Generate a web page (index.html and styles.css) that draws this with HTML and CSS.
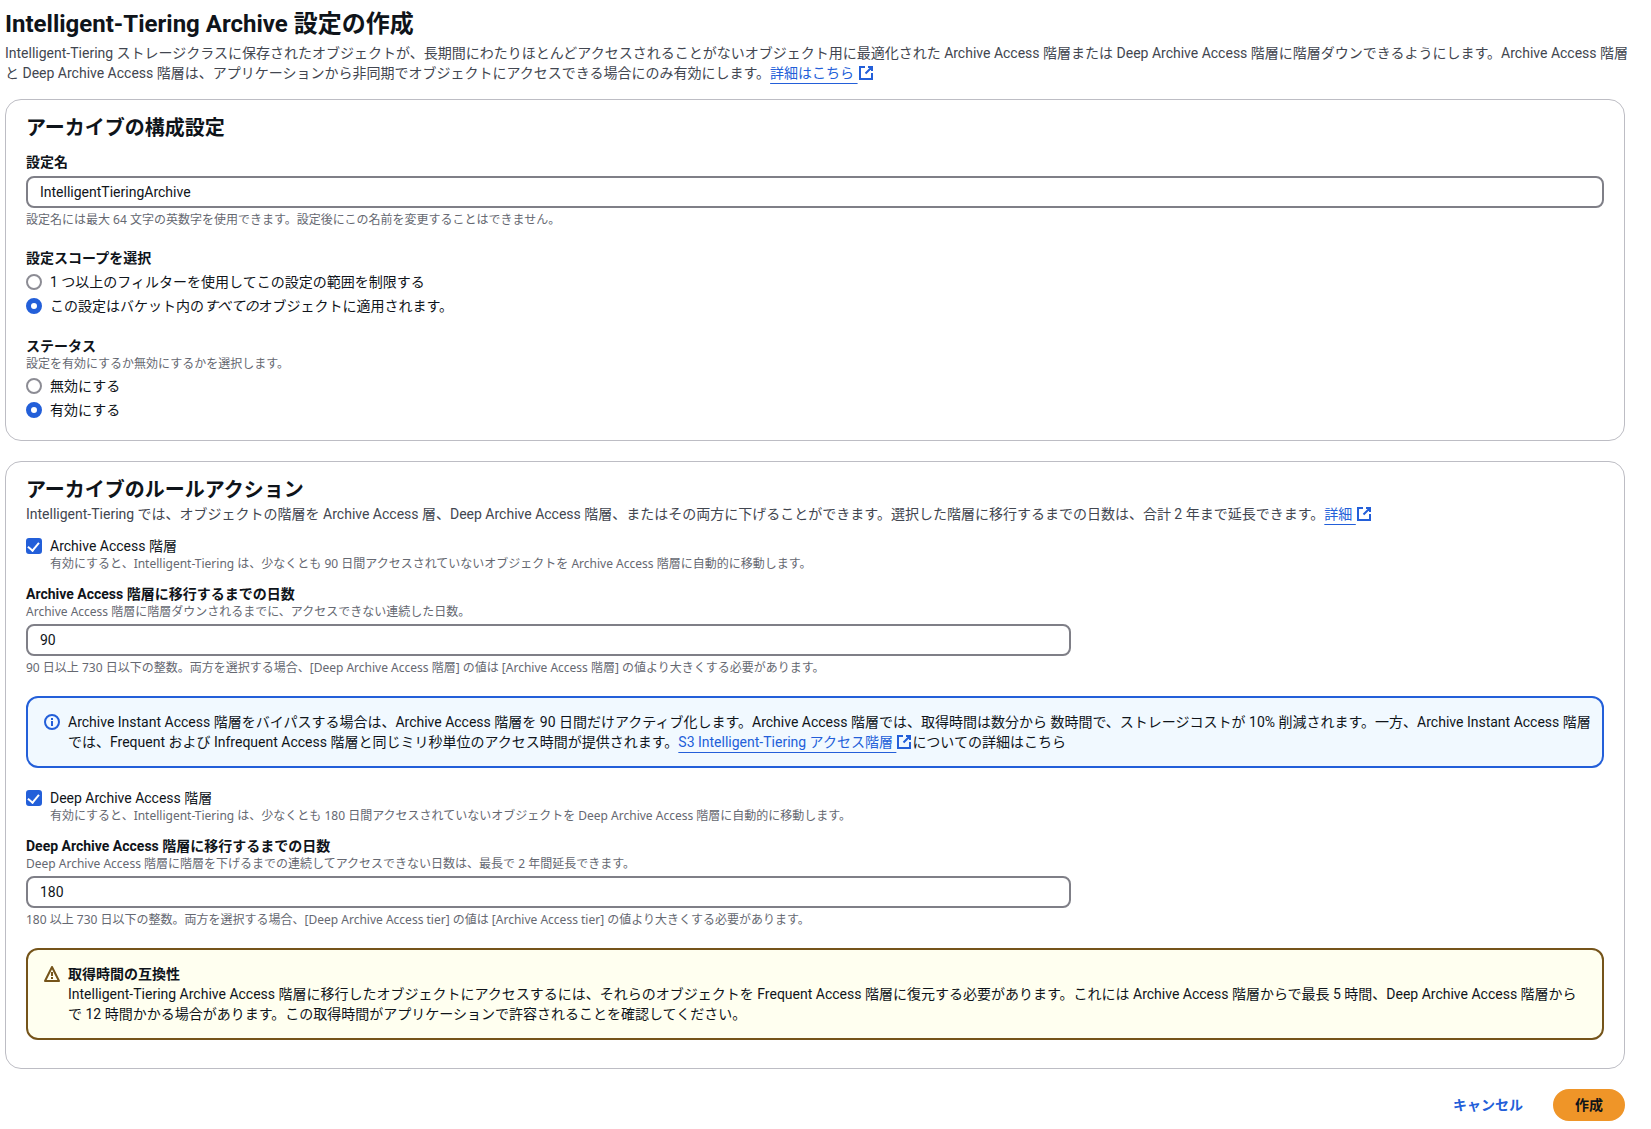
FILE: index.html
```html
<!DOCTYPE html>
<html lang="ja">
<head>
    <meta charset="UTF-8">
    <meta name="viewport" content="width=device-width, initial-scale=1">
    <title>Intelligent-Tiering Archive 設定の作成</title>
    <link rel="stylesheet" href="styles.css">
</head>
<body>
    <svg class="sprite" aria-hidden="true">
        <symbol id="icon-external" viewBox="0 0 16 16">
            <path d="M14 8v6H2V2h5M10 2h4v4M14 2 7.5 8.5" fill="none" stroke="currentColor" stroke-width="2"/>
        </symbol>
        <symbol id="icon-info" viewBox="0 0 16 16">
            <circle cx="8" cy="8" r="7" fill="none" stroke="currentColor" stroke-width="2"/>
            <path d="M8 7v5M8 4v2" fill="none" stroke="currentColor" stroke-width="2"/>
        </symbol>
        <symbol id="icon-warning" viewBox="0 0 16 16">
            <path d="M8 1 15 15H1L8 1Z" fill="none" stroke="currentColor" stroke-width="2" stroke-linejoin="round"/>
            <path d="M8 6v4M8 11v2" fill="none" stroke="currentColor" stroke-width="2"/>
        </symbol>
    </svg>

    <form class="page">
        <header class="page-header">
            <h1>Intelligent-Tiering Archive 設定の作成</h1>
            <p class="description">Intelligent-Tiering ストレージクラスに保存されたオブジェクトが、長期間にわたりほとんどアクセスされることがないオブジェクト用に最適化された Archive Access 階層または Deep Archive Access 階層に階層ダウンできるようにします。Archive Access 階層と Deep Archive Access 階層は、アプリケーションから非同期でオブジェクトにアクセスできる場合にのみ有効にします。<a href="#" class="link">詳細はこちら&nbsp;<svg class="icon"><use href="#icon-external"/></svg></a></p>
        </header>

        <section class="container">
            <div class="container-header">
                <h2>アーカイブの構成設定</h2>
            </div>
            <div class="container-content">
                <div class="form-field">
                    <label class="label" for="config-name">設定名</label>
                    <input class="text-input" type="text" id="config-name" value="IntelligentTieringArchive">
                    <p class="hint">設定名には最大 64 文字の英数字を使用できます。設定後にこの名前を変更することはできません。</p>
                </div>

                <fieldset class="form-field">
                    <legend class="label">設定スコープを選択</legend>
                    <div class="options">
                        <label class="option"><input type="radio" name="scope"><span>1 つ以上のフィルターを使用してこの設定の範囲を制限する</span></label>
                        <label class="option"><input type="radio" name="scope" checked><span>この設定はバケット内の<em>すべての</em>オブジェクトに適用されます。</span></label>
                    </div>
                </fieldset>

                <fieldset class="form-field">
                    <legend class="label">ステータス</legend>
                    <p class="small">設定を有効にするか無効にするかを選択します。</p>
                    <div class="options">
                        <label class="option"><input type="radio" name="status"><span>無効にする</span></label>
                        <label class="option"><input type="radio" name="status" checked><span>有効にする</span></label>
                    </div>
                </fieldset>
            </div>
        </section>

        <section class="container rules">
            <div class="container-header">
                <h2>アーカイブのルールアクション</h2>
                <p class="description">Intelligent-Tiering では、オブジェクトの階層を Archive Access 層、Deep Archive Access 階層、またはその両方に下げることができます。選択した階層に移行するまでの日数は、合計 2 年まで延長できます。<a href="#" class="link">詳細&nbsp;<svg class="icon"><use href="#icon-external"/></svg></a></p>
            </div>
            <div class="container-content">
                <div class="tier">
                    <div>
                        <label class="option"><input type="checkbox" checked aria-describedby="archive-desc"><span>Archive Access 階層</span></label>
                        <p class="small option-desc" id="archive-desc">有効にすると、Intelligent-Tiering は、少なくとも 90 日間アクセスされていないオブジェクトを Archive Access 階層に自動的に移動します。</p>
                    </div>
                    <div class="form-field">
                        <label class="label" for="archive-days">Archive Access 階層に移行するまでの日数</label>
                        <p class="small">Archive Access 階層に階層ダウンされるまでに、アクセスできない連続した日数。</p>
                        <div class="grid">
                            <input class="text-input" type="text" inputmode="numeric" id="archive-days" value="90">
                        </div>
                        <p class="hint">90 日以上 730 日以下の整数。両方を選択する場合、[Deep Archive Access 階層] の値は [Archive Access 階層] の値より大きくする必要があります。</p>
                    </div>
                </div>

                <div class="alert alert-info">
                    <svg class="icon"><use href="#icon-info"/></svg>
                    <p>Archive Instant Access 階層をバイパスする場合は、Archive Access 階層を 90 日間だけアクティブ化します。Archive Access 階層では、取得時間は数分から 数時間で、ストレージコストが 10% 削減されます。一方、Archive Instant Access 階層では、Frequent および Infrequent Access 階層と同じミリ秒単位のアクセス時間が提供されます。<a href="#" class="link">S3 Intelligent-Tiering アクセス階層&nbsp;<svg class="icon"><use href="#icon-external"/></svg></a>についての詳細はこちら</p>
                </div>

                <div class="tier">
                    <div>
                        <label class="option"><input type="checkbox" checked aria-describedby="deep-desc"><span>Deep Archive Access 階層</span></label>
                        <p class="small option-desc" id="deep-desc">有効にすると、Intelligent-Tiering は、少なくとも 180 日間アクセスされていないオブジェクトを Deep Archive Access 階層に自動的に移動します。</p>
                    </div>
                    <div class="form-field">
                        <label class="label" for="deep-days">Deep Archive Access 階層に移行するまでの日数</label>
                        <p class="small">Deep Archive Access 階層に階層を下げるまでの連続してアクセスできない日数は、最長で 2 年間延長できます。</p>
                        <div class="grid">
                            <input class="text-input" type="text" inputmode="numeric" id="deep-days" value="180">
                        </div>
                        <p class="hint">180 以上 730 日以下の整数。両方を選択する場合、[Deep Archive Access tier] の値は [Archive Access tier] の値より大きくする必要があります。</p>
                    </div>
                </div>

                <div class="alert alert-warning">
                    <svg class="icon"><use href="#icon-warning"/></svg>
                    <div>
                        <strong>取得時間の互換性</strong>
                        <p>Intelligent-Tiering Archive Access 階層に移行したオブジェクトにアクセスするには、それらのオブジェクトを Frequent Access 階層に復元する必要があります。これには Archive Access 階層からで最長 5 時間、Deep Archive Access 階層からで 12 時間かかる場合があります。この取得時間がアプリケーションで許容されることを確認してください。</p>
                    </div>
                </div>
            </div>
        </section>

        <div class="actions">
            <button type="button" class="button button-link">キャンセル</button>
            <button type="submit" class="button button-primary">作成</button>
        </div>
    </form>
</body>
</html>
```

FILE: styles.css
```css
* {
    box-sizing: border-box;
}

body {
    margin: 0;
    background-color: #ffffff;
    color: #0f141a;
    font-family: Roboto, "Noto Sans CJK JP", sans-serif;
    font-size: 14px;
    line-height: 20px;
}

h1,
h2,
p {
    margin: 0;
}

h1 {
    font-size: 24px;
    line-height: 30px;
}

h2 {
    font-size: 20px;
    line-height: 24px;
}

.sprite {
    display: none;
}

.icon {
    width: 16px;
    height: 16px;
    flex: none;
}

.page {
    padding: 9px 16px 8px 5px;
}

.page-header {
    display: flex;
    flex-direction: column;
    gap: 4px;
    margin-bottom: 16px;
}

.description {
    color: #424650;
}

.link {
    color: #235fd9;
    text-decoration: underline;
    text-decoration-thickness: 1px;
    text-underline-offset: 5px;
}

.link .icon {
    vertical-align: -3px;
}

/* Containers */
.container {
    border: 1px solid #bdbdc4;
    border-radius: 16px;
    padding: 16px 20px 20px;
    margin: 0 10px 20px 0;
}

.container-header {
    display: flex;
    flex-direction: column;
    gap: 2px;
    margin-bottom: 12px;
}

.container-content {
    display: flex;
    flex-direction: column;
    gap: 20px;
}

.rules {
    padding-bottom: 28px;
}

/* Form fields */
.form-field {
    min-width: 0;
    margin: 0;
    padding: 0;
    border: 0;
}

.label {
    display: block;
    padding: 0;
    font-weight: 700;
}

.small,
.hint {
    color: #656871;
    font-family: "Noto Sans", "Noto Sans CJK JP", sans-serif;
    font-size: 12px;
    line-height: 16px;
}

.hint {
    margin-top: 4px;
}

.text-input {
    display: block;
    width: 100%;
    height: 32px;
    margin-top: 4px;
    padding: 4px 12px;
    border: 2px solid #7f7f87;
    border-radius: 8px;
    background-color: #ffffff;
    color: inherit;
    font: inherit;
}

.grid {
    display: grid;
    grid-template-columns: repeat(12, minmax(0, 1fr));
    column-gap: 20px;
}

.grid .text-input {
    grid-column: span 8;
}

/* Radios and checkboxes */
.options {
    display: flex;
    flex-direction: column;
    gap: 4px;
    margin-top: 4px;
}

.option {
    display: flex;
    align-items: center;
    gap: 8px;
}

.option input {
    appearance: none;
    flex: none;
    width: 16px;
    height: 16px;
    margin: 0;
    border: 2px solid #8c8c94;
    background-color: #ffffff;
}

.option input[type="radio"] {
    border-radius: 50%;
}

.option input[type="radio"]:checked {
    border: 5px solid #235fd9;
}

.option input[type="checkbox"] {
    display: grid;
    place-items: center;
    border-radius: 3px;
}

.option input[type="checkbox"]:checked {
    border-color: #235fd9;
    background-color: #235fd9;
}

.option input[type="checkbox"]:checked::before {
    content: "";
    width: 5px;
    height: 9px;
    margin: 0 1px 2px 0;
    border: solid #ffffff;
    border-width: 0 2px 2px 0;
    transform: rotate(40deg);
}

.option-desc {
    padding-left: 24px;
}

.tier {
    display: flex;
    flex-direction: column;
    gap: 12px;
}

/* Alerts */
.alert {
    display: flex;
    gap: 8px;
    padding: 14px 16px;
    border: 2px solid;
    border-radius: 12px;
}

.alert > .icon {
    margin-top: 2px;
}

.alert strong {
    display: block;
}

.alert-info {
    padding-right: 8px;
    border-color: #235fd9;
    background-color: #f1f9ff;
}

.alert-info > .icon {
    color: #235fd9;
}

.alert-warning {
    border-color: #75541a;
    background-color: #fffff0;
}

.alert-warning > .icon {
    color: #75541a;
}

/* Footer buttons */
.actions {
    display: flex;
    justify-content: flex-end;
    gap: 8px;
    margin-right: 10px;
}

.button {
    padding: 4px 20px;
    border: 2px solid transparent;
    border-radius: 20px;
    background-color: transparent;
    font: inherit;
    font-weight: 700;
    cursor: pointer;
}

.button-link {
    color: #235fd9;
}

.button-primary {
    border-color: #ef9528;
    background-color: #ef9528;
    color: #0f141a;
}
```
